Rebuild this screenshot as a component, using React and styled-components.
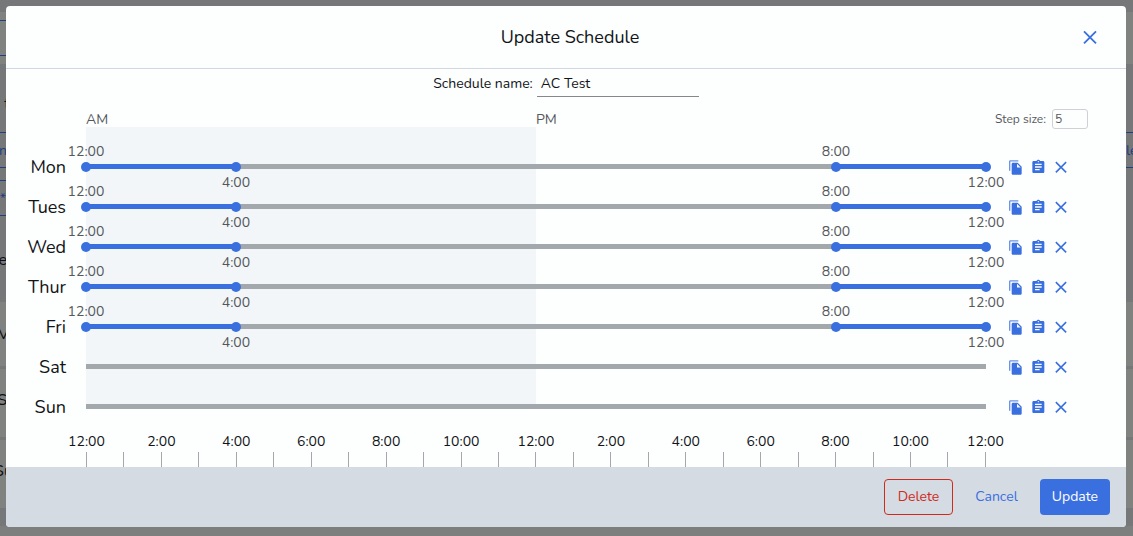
import React, { useState } from 'react';
import styled, { createGlobalStyle } from 'styled-components';

const BLUE = '#3a6fdf';

const GlobalStyle = createGlobalStyle`
  * {
    box-sizing: border-box;
  }

  body {
    margin: 0;
    background: #7c7f7e;
    color: #111418;
    font-family: Nunito, Lato, 'Noto Sans', sans-serif;
    font-size: 14px;
  }

  button, input {
    font: inherit;
  }
`;

/* Dimmed page behind the dialog */
const Screen = styled.div`
  display: grid;
  grid-template-columns: minmax(0, 1fr);
  min-height: 100vh;
  overflow: hidden;

  > * {
    grid-area: 1 / 1;
  }
`;

const Backdrop = styled.div`
  min-width: 0;
  overflow: hidden;
`;

const Band = styled.div`
  display: flex;
  justify-content: space-between;
  align-items: center;
  height: ${(p) => p.$height}px;
  background: ${(p) => (p.$light ? '#7f827f' : '#767779')};
  color: ${(p) => (p.$link ? '#213f80' : '#0d0e10')};
  border: 0 solid #213f80;
  border-width: ${(p) => (p.$lined ? '1px 0' : '0')};
  font-size: ${(p) => (p.$link ? 14 : 16)}px;
`;

const ListBand = styled(Band)`
  padding-bottom: 6px;
`;

const Divider = styled.div`
  height: 3px;
  background: #767779;
`;

const Edge = styled.span`
  display: flex;
  justify-content: ${(p) => p.$align || 'flex-end'};
  width: 7px;
  overflow: hidden;
  white-space: nowrap;
`;

const Pill = styled.span`
  display: flex;
  justify-content: flex-end;
  align-items: center;
  width: 6px;
  height: 36px;
  border: solid #213f80;
  border-width: 1px 0;
`;

const TopBar = styled.div`
  display: flex;
  align-items: center;
  height: 52px;
  background: #7f827f;
`;

const TopBox = styled.span`
  width: 50%;
  height: 36px;
  border: solid #213f80;
  border-width: 1px 0;
`;

const Modal = styled.section`
  display: flex;
  flex-direction: column;
  align-self: start;
  min-width: 0;
  margin: 6px 7px 9px 6px;
  background: #fdfefe;
  border-radius: 4px;
  overflow: hidden;
  z-index: 1;
`;

const Header = styled.header`
  display: grid;
  grid-template-columns: 1fr auto 1fr;
  align-items: center;
  height: 63px;
  padding: 0 26px 0 34px;
  border-bottom: 1px solid #cfd8e3;

  h1 {
    grid-column: 2;
    margin: 0;
    font-size: 18px;
    font-weight: 400;
  }
`;

const IconButton = styled.button`
  display: flex;
  justify-content: center;
  align-items: center;
  justify-self: end;
  width: ${(p) => p.$size}px;
  height: ${(p) => p.$size}px;
  padding: 0;
  border: 0;
  background: none;
  color: ${BLUE};
  cursor: pointer;
`;

const Body = styled.div`
  padding: 0 38px 0 14px;
`;

const NameField = styled.div`
  display: flex;
  justify-content: center;
  align-items: center;
  gap: 4px;
  height: 28px;
  margin: 0 -38px 0 -14px;
`;

const NameInput = styled.input`
  width: 162px;
  height: 28px;
  padding: 2px 4px 0;
  border: 0;
  border-bottom: 1px solid #85888b;
  background: transparent;
  color: #111418;
  outline: none;
`;

const Columns = styled.div`
  display: grid;
  grid-template-columns: 46px minmax(0, 1fr) 82px;
  column-gap: 20px;
`;

const TopRow = styled(Columns)`
  align-items: center;
  height: 30px;
  padding-top: 12px;
  color: #55585b;
`;

const Halves = styled.div`
  display: grid;
  grid-column: 2;
  grid-template-columns: 1fr 1fr;
`;

const StepField = styled.div`
  display: flex;
  justify-content: flex-end;
  align-items: center;
  gap: 6px;
  font-size: 12px;
  white-space: nowrap;
`;

const StepInput = styled.input`
  width: 36px;
  height: 20px;
  padding: 0 2px;
  border: 1px solid #cfd2d5;
  border-radius: 3px;
  background: transparent;
  color: #55585b;
`;

const Day = styled(Columns)`
  align-items: center;
  height: 40px;
`;

const DayName = styled.span`
  font-size: 18px;
  text-align: right;
`;

const Days = styled.div`
  display: grid;

  > * {
    grid-area: 1 / 1;
  }
`;

const Shade = styled.div`
  width: 50%;
  height: 277px;
  grid-column: 2;
  background: #f2f6f9;
`;

const DayList = styled.div`
  padding-top: 20px;
`;

const Track = styled.div`
  position: relative;
  height: 5px;
  margin-bottom: 1px;
  background: #a3a8ad;
`;

const Range = styled.div`
  position: absolute;
  top: 0;
  height: 5px;
  background: ${BLUE};
`;

const Handle = styled.span`
  position: absolute;
  top: -2px;
  ${(p) => (p.$end ? 'right' : 'left')}: -5px;
  width: 10px;
  height: 10px;
  border-radius: 50%;
  background: ${BLUE};
`;

const Time = styled.span`
  position: absolute;
  left: 50%;
  ${(p) => (p.$below ? 'top: 12px' : 'bottom: 11px')};
  line-height: 18px;
  color: #55585b;
  transform: translateX(-50%);
`;

const Actions = styled.div`
  display: flex;
  gap: 3px;
  margin-left: -1px;
`;

const Scale = styled(Columns)`
  height: 40px;
`;

const Ticks = styled.div`
  display: flex;
  grid-column: 2;
  justify-content: space-between;
  align-items: flex-end;
`;

const Tick = styled.div`
  display: flex;
  flex-direction: column;
  align-items: center;
  width: 1px;
  line-height: 18px;

  &::after {
    content: '';
    width: 1px;
    height: 15px;
    margin-top: 1px;
    background: #a3a8ad;
  }
`;

const Footer = styled.footer`
  display: flex;
  justify-content: flex-end;
  align-items: center;
  gap: 16px;
  height: 60px;
  padding: 0 16px;
  background: #d5dbe3;
`;

const Button = styled.button`
  height: 36px;
  padding: 0 12px 2px;
  border: 0;
  border-radius: 4px;
  background: ${BLUE};
  color: #fff;
  cursor: pointer;
`;

const TextButton = styled(Button)`
  padding: 0 6px 2px;
  background: transparent;
  color: ${BLUE};
`;

const DangerButton = styled(Button)`
  padding: 0 13px 2px;
  border: 1px solid #cf2b1d;
  background: transparent;
  color: #cf2b1d;
`;

const workday = [
  { from: 0, to: 4 },
  { from: 20, to: 24 },
];

const week = [
  { name: 'Mon', ranges: workday },
  { name: 'Tues', ranges: workday },
  { name: 'Wed', ranges: workday },
  { name: 'Thur', ranges: workday },
  { name: 'Fri', ranges: workday },
  { name: 'Sat', ranges: [] },
  { name: 'Sun', ranges: [] },
];

const formatHour = (hour) => `${hour % 12 || 12}:00`;

const CloseIcon = ({ size }) => (
  <svg width={size} height={size} viewBox="0 0 14 14" fill="none" stroke="currentColor" strokeWidth="1.8">
    <path d="M1 1.300l12 12M13 1.300L1 13.300" />
  </svg>
);

const CopyIcon = () => (
  <svg width="16" height="16" viewBox="-1 -0.7 24 24" fill="currentColor">
    <path opacity="0.75" d="M16 1H4c-1.100 0-2 .9-2 2v14h2V3h12V1z" />
    <path d="M15 5l6 6v10c0 1.100-.9 2-2 2H7.990C6.890 23 6 22.100 6 21l.01-14c0-1.100.89-2 1.990-2h7zm-1 7h5.500L14 6.500V12z" />
  </svg>
);

const PasteIcon = () => (
  <svg width="16" height="16" viewBox="-0.5 0 24 24" fill="currentColor">
    <path d="M19 3h-4.180C14.400 1.840 13.300 1 12 1c-1.300 0-2.400.84-2.820 2H5c-1.100 0-2 .9-2 2v14c0 1.100.9 2 2 2h14c1.100 0 2-.9 2-2V5c0-1.100-.9-2-2-2zm-7 0c.55 0 1 .45 1 1s-.45 1-1 1-1-.45-1-1 .45-1 1-1zm2 14H7v-2h7v2zm3-4H7v-2h10v2zm0-4H7V7h10v2z" />
  </svg>
);

function PageBehind() {
  return (
    <Backdrop aria-hidden="true">
      <Band $height={12} />
      <TopBar>
        <TopBox />
      </TopBar>
      <Band $height={11} />
      <Band $height={57}>
        <Edge $align="flex-start">&nbsp;t</Edge>
      </Band>
      <Band $height={36} $lined $link>
        <Edge>n</Edge>
        <Edge $align="flex-start">le</Edge>
      </Band>
      <Band $height={12} />
      <Band $height={36} $link>
        <Pill>*</Pill>
      </Band>
      <Band $height={2} />
      <Band $height={84}>
        <Edge>e</Edge>
      </Band>
      <Band $height={64} $light>
        <Edge $align="center">V</Edge>
      </Band>
      <Divider />
      <ListBand $height={68} $light>
        <Edge>S</Edge>
      </ListBand>
      <Divider />
      <ListBand $height={68} $light>
        <Edge $align="center">Su</Edge>
      </ListBand>
      <Band $height={18} />
    </Backdrop>
  );
}

function DayRow({ name, ranges, onClear }) {
  return (
    <Day>
      <DayName>{name}</DayName>
      <Track>
        {ranges.map(({ from, to }) => (
          <Range key={from} style={{ left: `${(from / 24) * 100}%`, width: `${((to - from) / 24) * 100}%` }}>
            <Handle>
              <Time>{formatHour(from)}</Time>
            </Handle>
            <Handle $end>
              <Time $below>{formatHour(to)}</Time>
            </Handle>
          </Range>
        ))}
      </Track>
      <Actions>
        <IconButton type="button" $size={20} aria-label={`Copy ${name}`}>
          <CopyIcon />
        </IconButton>
        <IconButton type="button" $size={20} aria-label={`Paste ${name}`}>
          <PasteIcon />
        </IconButton>
        <IconButton type="button" $size={20} aria-label={`Clear ${name}`} onClick={onClear}>
          <CloseIcon size={12} />
        </IconButton>
      </Actions>
    </Day>
  );
}

function App() {
  const [scheduleName, setScheduleName] = useState('AC Test');
  const [step, setStep] = useState('5');
  const [days, setDays] = useState(week);

  const clearDay = (name) => {
    setDays(days.map((day) => (day.name === name ? { ...day, ranges: [] } : day)));
  };

  return (
    <>
      <GlobalStyle />
      <Screen>
        <PageBehind />
        <Modal role="dialog" aria-labelledby="title">
          <Header>
            <h1 id="title">Update Schedule</h1>
            <IconButton type="button" $size={20} aria-label="Close">
              <CloseIcon size={14} />
            </IconButton>
          </Header>
          <Body>
            <NameField>
              <label htmlFor="name">Schedule name:</label>
              <NameInput id="name" value={scheduleName} onChange={(e) => setScheduleName(e.target.value)} />
            </NameField>
            <TopRow>
              <Halves>
                <span>AM</span>
                <span>PM</span>
              </Halves>
              <StepField>
                <label htmlFor="step">Step size:</label>
                <StepInput id="step" value={step} onChange={(e) => setStep(e.target.value)} />
              </StepField>
            </TopRow>
            <Days>
              <Columns>
                <Shade />
              </Columns>
              <DayList>
                {days.map((day) => (
                  <DayRow key={day.name} {...day} onClear={() => clearDay(day.name)} />
                ))}
              </DayList>
            </Days>
            <Scale>
              <Ticks>
                {Array.from({ length: 25 }, (_, hour) => (
                  <Tick key={hour}>{hour % 2 === 0 && formatHour(hour)}</Tick>
                ))}
              </Ticks>
            </Scale>
          </Body>
          <Footer>
            <DangerButton type="button">Delete</DangerButton>
            <TextButton type="button">Cancel</TextButton>
            <Button type="button">Update</Button>
          </Footer>
        </Modal>
      </Screen>
    </>
  );
}

export default App;
